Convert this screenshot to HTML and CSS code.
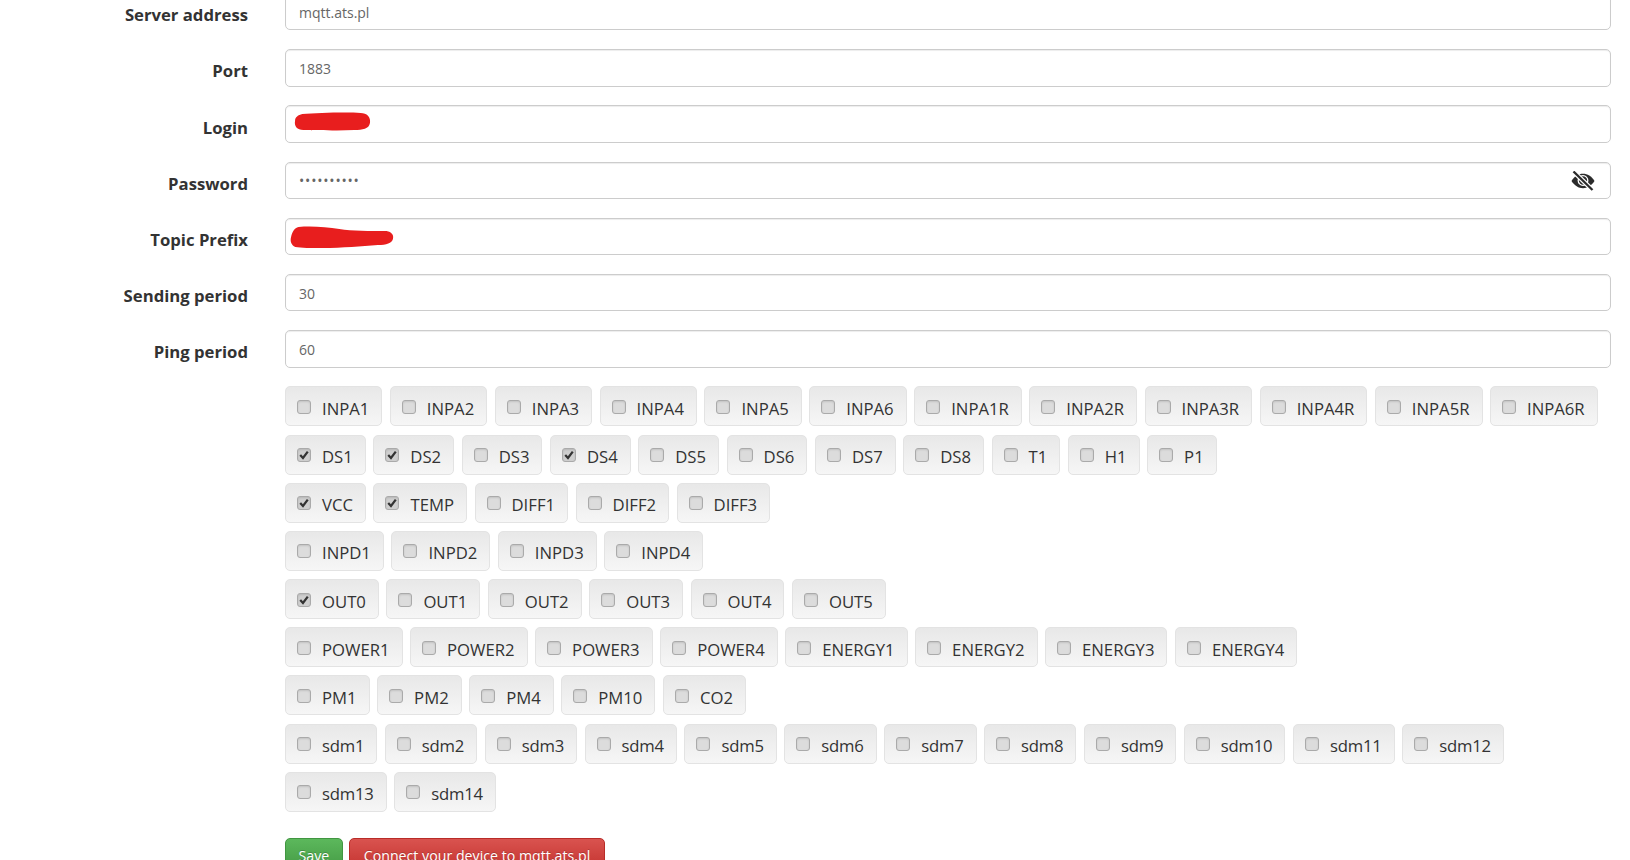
FILE: index.html
```html
<!DOCTYPE html>
<html lang="en">
<head>
<meta charset="utf-8">
<title>MQTT settings</title>
<link rel="stylesheet" href="styles.css">
</head>
<body>
<form class="form">
  <div class="row"><label class="lbl">Server address</label><div class="field"><input class="inp" type="text" value="mqtt.ats.pl"></div></div>
  <div class="row"><label class="lbl">Port</label><div class="field"><input class="inp" type="text" value="1883"></div></div>
  <div class="row"><label class="lbl">Login</label><div class="field"><input class="inp" type="text">
    <svg class="scribble scribble-login" viewBox="0 0 74 20" preserveAspectRatio="none"><path d="M8 2C22 1 50 0 64 1C70 1 74 5 73 11C72 17 66 18 58 18C42 19 22 18 9 18C3 18 0 14 1 9C1 5 4 3 8 2Z" fill="#e81e1e"/></svg>
  </div></div>
  <div class="row"><label class="lbl">Password</label><div class="field"><input class="inp inp-pass" type="password" value="0123456789">
    <svg class="eye" viewBox="0 0 24 20"><path fill="#2b2b2b" d="M.5 10C3.500 5.300 7.500 2.800 12 2.800C16.500 2.800 20.500 5.300 23.500 10C20.500 14.700 16.500 17.200 12 17.200C7.500 17.200 3.500 14.700 .5 10Z"/><circle cx="12" cy="9.500" r="4.800" fill="#2b2b2b" stroke="#fff" stroke-width="1.300"/><path d="M2.500 .5 21.500 19" stroke="#fff" stroke-width="4.600" fill="none"/><path d="M2.500 .5 21.500 19" stroke="#2b2b2b" stroke-width="2.300" fill="none"/></svg>
  </div></div>
  <div class="row"><label class="lbl">Topic Prefix</label><div class="field"><input class="inp" type="text">
    <svg class="scribble scribble-topic" viewBox="0 0 97 23" preserveAspectRatio="none"><path d="M8 1C20 0 34 1 46 3C58 5 74 5 90 5C95 6 97 9 96 13C95 17 90 19 82 19C66 20 50 22 30 22C20 22 10 22 5 21C1 19 0 15 1 11C2 6 4 2 8 1Z" fill="#e81e1e"/></svg>
  </div></div>
  <div class="row"><label class="lbl">Sending period</label><div class="field"><input class="inp" type="text" value="30"></div></div>
  <div class="row"><label class="lbl">Ping period</label><div class="field"><input class="inp" type="text" value="60"></div></div>

  <div class="chips">
    <div class="chip-row">
      <label class="chip"><span class="box"></span>INPA1</label>
      <label class="chip"><span class="box"></span>INPA2</label>
      <label class="chip"><span class="box"></span>INPA3</label>
      <label class="chip"><span class="box"></span>INPA4</label>
      <label class="chip"><span class="box"></span>INPA5</label>
      <label class="chip"><span class="box"></span>INPA6</label>
      <label class="chip"><span class="box"></span>INPA1R</label>
      <label class="chip"><span class="box"></span>INPA2R</label>
      <label class="chip"><span class="box"></span>INPA3R</label>
      <label class="chip"><span class="box"></span>INPA4R</label>
      <label class="chip"><span class="box"></span>INPA5R</label>
      <label class="chip"><span class="box"></span>INPA6R</label>
    </div>
    <div class="chip-row">
      <label class="chip"><span class="box on"><svg viewBox="0 0 14 14"><path d="M2.600 7 5.800 10.500 11.400 3" fill="none" stroke="#333" stroke-width="2.600"/></svg></span>DS1</label>
      <label class="chip"><span class="box on"><svg viewBox="0 0 14 14"><path d="M2.600 7 5.800 10.500 11.400 3" fill="none" stroke="#333" stroke-width="2.600"/></svg></span>DS2</label>
      <label class="chip"><span class="box"></span>DS3</label>
      <label class="chip"><span class="box on"><svg viewBox="0 0 14 14"><path d="M2.600 7 5.800 10.500 11.400 3" fill="none" stroke="#333" stroke-width="2.600"/></svg></span>DS4</label>
      <label class="chip"><span class="box"></span>DS5</label>
      <label class="chip"><span class="box"></span>DS6</label>
      <label class="chip"><span class="box"></span>DS7</label>
      <label class="chip"><span class="box"></span>DS8</label>
      <label class="chip"><span class="box"></span>T1</label>
      <label class="chip"><span class="box"></span>H1</label>
      <label class="chip"><span class="box"></span>P1</label>
    </div>
    <div class="chip-row">
      <label class="chip"><span class="box on"><svg viewBox="0 0 14 14"><path d="M2.600 7 5.800 10.500 11.400 3" fill="none" stroke="#333" stroke-width="2.600"/></svg></span>VCC</label>
      <label class="chip"><span class="box on"><svg viewBox="0 0 14 14"><path d="M2.600 7 5.800 10.500 11.400 3" fill="none" stroke="#333" stroke-width="2.600"/></svg></span>TEMP</label>
      <label class="chip"><span class="box"></span>DIFF1</label>
      <label class="chip"><span class="box"></span>DIFF2</label>
      <label class="chip"><span class="box"></span>DIFF3</label>
    </div>
    <div class="chip-row">
      <label class="chip"><span class="box"></span>INPD1</label>
      <label class="chip"><span class="box"></span>INPD2</label>
      <label class="chip"><span class="box"></span>INPD3</label>
      <label class="chip"><span class="box"></span>INPD4</label>
    </div>
    <div class="chip-row">
      <label class="chip"><span class="box on"><svg viewBox="0 0 14 14"><path d="M2.600 7 5.800 10.500 11.400 3" fill="none" stroke="#333" stroke-width="2.600"/></svg></span>OUT0</label>
      <label class="chip"><span class="box"></span>OUT1</label>
      <label class="chip"><span class="box"></span>OUT2</label>
      <label class="chip"><span class="box"></span>OUT3</label>
      <label class="chip"><span class="box"></span>OUT4</label>
      <label class="chip"><span class="box"></span>OUT5</label>
    </div>
    <div class="chip-row">
      <label class="chip"><span class="box"></span>POWER1</label>
      <label class="chip"><span class="box"></span>POWER2</label>
      <label class="chip"><span class="box"></span>POWER3</label>
      <label class="chip"><span class="box"></span>POWER4</label>
      <label class="chip"><span class="box"></span>ENERGY1</label>
      <label class="chip"><span class="box"></span>ENERGY2</label>
      <label class="chip"><span class="box"></span>ENERGY3</label>
      <label class="chip"><span class="box"></span>ENERGY4</label>
    </div>
    <div class="chip-row">
      <label class="chip"><span class="box"></span>PM1</label>
      <label class="chip"><span class="box"></span>PM2</label>
      <label class="chip"><span class="box"></span>PM4</label>
      <label class="chip"><span class="box"></span>PM10</label>
      <label class="chip"><span class="box"></span>CO2</label>
    </div>
    <div class="chip-row chip-row-tight">
      <label class="chip"><span class="box"></span>sdm1</label>
      <label class="chip"><span class="box"></span>sdm2</label>
      <label class="chip"><span class="box"></span>sdm3</label>
      <label class="chip"><span class="box"></span>sdm4</label>
      <label class="chip"><span class="box"></span>sdm5</label>
      <label class="chip"><span class="box"></span>sdm6</label>
      <label class="chip"><span class="box"></span>sdm7</label>
      <label class="chip"><span class="box"></span>sdm8</label>
      <label class="chip"><span class="box"></span>sdm9</label>
      <label class="chip"><span class="box"></span>sdm10</label>
      <label class="chip"><span class="box"></span>sdm11</label>
      <label class="chip"><span class="box"></span>sdm12</label>
    </div>
    <div class="chip-row chip-row-tight">
      <label class="chip"><span class="box"></span>sdm13</label>
      <label class="chip"><span class="box"></span>sdm14</label>
    </div>
  </div>

  <div class="actions">
    <button class="btn btn-save" type="button">Save</button>
    <button class="btn btn-connect" type="button">Connect your device to mqtt.ats.pl</button>
  </div>
</form>
</body>
</html>
```
FILE: styles.css
```css
html, body {
  margin: 0;
  height: 860px;
  overflow: hidden;
  background: #fff;
}
body {
  font-family: "Open Sans", "Noto Sans", sans-serif;
  color: #333;
}
.form {
  margin-top: -7px;
  padding: 0 19px 0 0;
}
.row {
  display: flex;
  align-items: center;
  height: 37.400px;
  margin-bottom: 18.800px;
}
.lbl {
  width: 248px;
  margin-right: 37px;
  text-align: right;
  font-size: 16.700px;
  font-weight: 700;
  position: relative;
  top: 3px;
}
.field {
  position: relative;
  flex: 1;
}
.inp {
  display: block;
  box-sizing: border-box;
  width: 100%;
  height: 37.400px;
  padding: 1px 13px 0;
  border: 1px solid #ccc;
  border-radius: 5px;
  box-shadow: inset 0 1px 1px rgba(0,0,0,.075);
  font: 14px "Open Sans", sans-serif;
  color: #666;
  background: #fff;
}
.inp-pass {
  letter-spacing: .8px;
}
.scribble {
  position: absolute;
  display: block;
}
.scribble-login {
  left: 9px;
  top: 7px;
  width: 77px;
  height: 20px;
}
.scribble-topic {
  left: 5px;
  top: 8px;
  width: 104px;
  height: 23px;
}
.eye {
  position: absolute;
  right: 16px;
  top: 9px;
  width: 24px;
  height: 20px;
}
.chips {
  margin-left: 285px;
}
.chip-row {
  display: flex;
  gap: 7.500px;
  height: 40px;
  margin-bottom: 8.200px;
}
.chip {
  display: flex;
  align-items: center;
  box-sizing: border-box;
  height: 40px;
  padding: 4px 12px 0 11px;
  border: 1px solid #e3e3e3;
  border-radius: 5px;
  background: linear-gradient(#e8e8e8, #f6f6f6);
  font-size: 16.700px;
  color: #333;
  white-space: nowrap;
}
.chip-row-tight .chip {
  letter-spacing: -.2px;
}
.box {
  box-sizing: border-box;
  width: 14px;
  height: 14px;
  margin: -3px 11px 0 0;
  border: 1px solid #aaa;
  border-radius: 3px;
  background: #dcdcdc;
  box-shadow: inset 0 1px 2px rgba(0,0,0,.12);
  flex: none;
}
.box.on {
  background: #cfcfcf;
}
.box svg {
  display: block;
  width: 12px;
  height: 12px;
}
.actions {
  display: flex;
  gap: 6px;
  margin-left: 285px;
  margin-top: 26px;
}
.btn {
  height: 37px;
  padding: 0 14px 2px;
  border-radius: 5px;
  font: 14.200px "Open Sans", sans-serif;
  color: #fff;
  text-shadow: 0 -1px 0 rgba(0,0,0,.2);
}
.btn-save {
  padding: 0 12.500px 2px;
  border: 1px solid #419641;
  background: linear-gradient(#5cb85c, #419641);
}
.btn-connect {
  border: 1px solid #b92c28;
  background: linear-gradient(#d9534f, #c12e2a);
}
```
